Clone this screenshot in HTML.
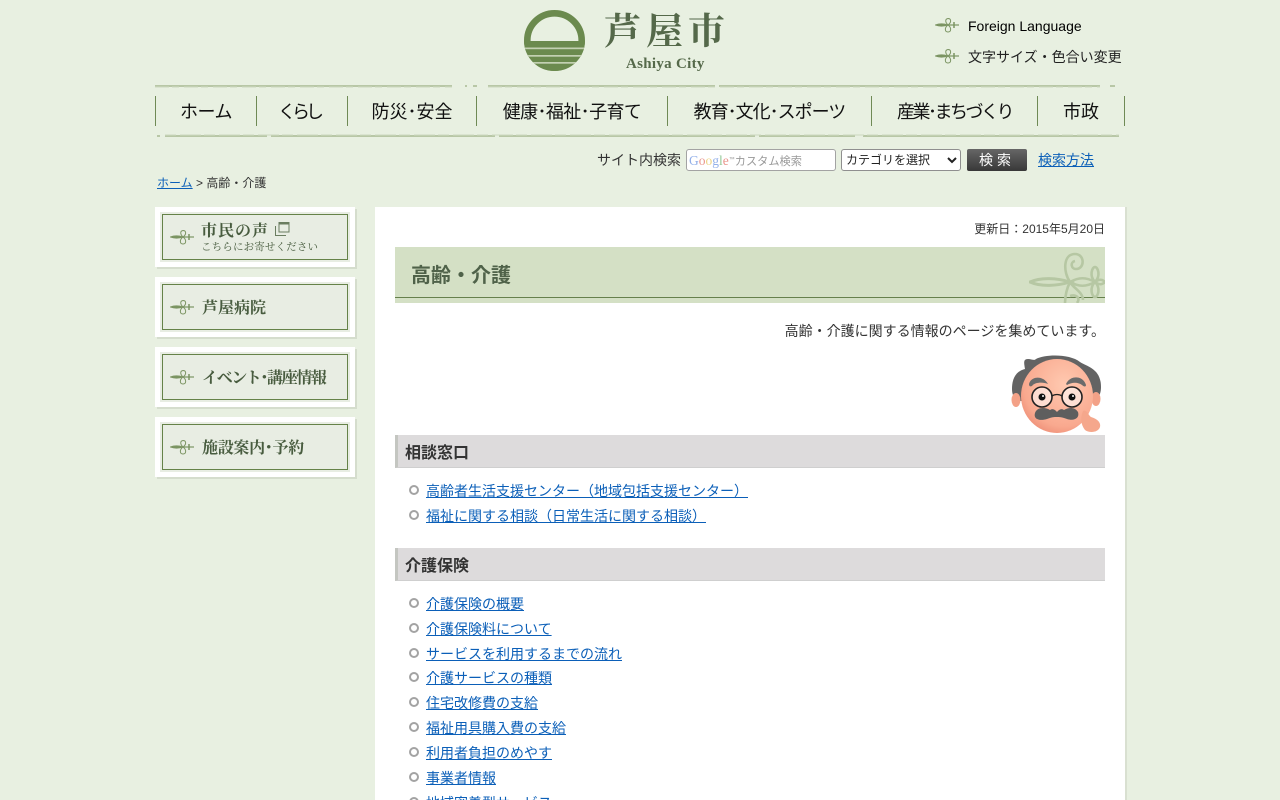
<!DOCTYPE html>
<html lang="ja"><head><meta charset="utf-8"><title>高齢・介護</title>
<style>
html,body{margin:0;padding:0;background:#e8f0e1;width:1280px;height:800px;overflow:hidden}
body{position:relative;font-family:"Liberation Sans","Noto Sans CJK JP",sans-serif;color:#333;font-size:14px}
a{color:#0b5fb8}
.a{position:absolute;white-space:nowrap}
.serif{font-family:"Liberation Serif","Noto Serif CJK JP","Noto Serif CJK SC",serif}
.nav{position:absolute;top:97px;height:28px;line-height:28px;font-size:18px;color:#111;font-family:"Noto Sans CJK JP",sans-serif;font-weight:400;white-space:nowrap;text-align:center}
.sep{position:absolute;top:96px;width:1px;height:30px;background:#6f8a55}
.btn{position:absolute;left:155px;width:200px;height:60px;background:#fff;box-shadow:2px 2px 0 #d5ddcd}
.btn i{position:absolute;left:5px;top:5px;width:190px;height:50px;background:#e8ede3}
.btn b{position:absolute;left:7px;top:7px;width:184px;height:44px;border:1px solid #658248}
.btn span{position:absolute;left:47px;top:14px;font:700 16px/26px "Noto Serif CJK SC",serif;color:#485c3f;white-space:nowrap}
.btn svg{position:absolute;left:15px;top:22px}
h2{position:absolute;left:395px;width:707px;height:32px;margin:0;background:#dddbdc;border-left:3px solid #c4c6c1;border-bottom:1px solid #cfcfcf;font-size:16px;line-height:38px;font-weight:700;color:#333;text-indent:7px;overflow:hidden}
.li{position:absolute;left:426px;font-size:14px;line-height:20px;white-space:nowrap}
.li::before{content:"";position:absolute;left:-17px;top:4px;width:6px;height:6px;border:2px solid #a3a3a3;border-radius:50%}
</style></head><body>
<svg width="0" height="0" style="position:absolute"><defs>
<g id="orn" fill="none" stroke="#7b9462"><path d="M0 8C4 6.5 9 6.5 13 8C9 9.5 4 9.5 0 8Z" fill="#7b9462" stroke-width=".8"/><path d="M13 8H24" stroke-width="1.2"/><path d="M13 8C10 5 10 2 13 1.5C16 1.5 17 5 13 8C9 11 10 15 13 15C16 15 17 11 13 8" stroke-width="1"/><path d="M19 5V11" stroke-width="1.5"/></g>
</defs></svg>

<!-- Logo -->
<svg class="a" style="left:524px;top:10px" width="61" height="61" viewBox="0 0 61 61">
<defs><clipPath id="c"><circle cx="30.5" cy="30.5" r="30.5"/></clipPath></defs>
<circle cx="30.5" cy="30.5" r="27.2" fill="none" stroke="#6b8a4e" stroke-width="6.6"/>
<g clip-path="url(#c)"><rect y="31" width="61" height="30" fill="#6b8a4e"/><rect y="37.5" width="61" height="1.7" fill="#c3d0b2"/><rect y="45" width="61" height="1.7" fill="#c3d0b2"/><rect y="52" width="61" height="1.7" fill="#c3d0b2"/></g>
</svg>
<div class="a serif" style="left:604px;top:10px;font-size:37px;line-height:46px;color:#55694a;letter-spacing:5px;font-weight:700">芦屋市</div>
<div class="a serif" style="left:626px;top:55px;font-size:15px;line-height:18px;color:#55694a;font-weight:700;letter-spacing:.3px">Ashiya City</div>

<svg class="a" style="left:935px;top:17px" width="24" height="17"><use href="#orn"/></svg>
<div class="a" style="left:968px;top:17px;line-height:18px;color:#000">Foreign Language</div>
<svg class="a" style="left:935px;top:48px" width="24" height="17"><use href="#orn"/></svg>
<div class="a" style="left:968px;top:48px;line-height:18px;color:#222">文字サイズ・色合い変更</div>

<!-- Nav -->
<svg class="a" style="left:155px;top:84px" width="970" height="54">
<path d="M0 2H297M310 2H312M318 2H322M333 2H560M564 2H945M955 2H960" stroke="#b8c7a6" stroke-width="2"/>
<path d="M0 2H297M333 2H945" stroke="#cdd8bf" stroke-width="1" stroke-dasharray="14 3 7 5" transform="translate(0,1)"/>
<path d="M2 52H5M10 52H112M116 52H340M344 52H600M604 52H700M708 52H964" stroke="#b8c7a6" stroke-width="2"/>
<path d="M10 52H964" stroke="#cdd8bf" stroke-width="1" stroke-dasharray="11 4 21 3" transform="translate(0,-1)"/>
</svg>
<div class="sep" style="left:155px"></div><div class="sep" style="left:256px"></div><div class="sep" style="left:347px"></div><div class="sep" style="left:476px"></div><div class="sep" style="left:667px"></div><div class="sep" style="left:871px"></div><div class="sep" style="left:1037px"></div><div class="sep" style="left:1124px"></div>
<div class="nav" style="left:156px;width:100px;letter-spacing:-.5px">ホーム</div>
<div class="nav" style="left:254px;width:90px;letter-spacing:-4px">くらし</div>
<div class="nav" style="left:348px;width:128px">防災･安全</div>
<div class="nav" style="left:477px;width:190px;letter-spacing:-.6px">健康･福祉･子育て</div>
<div class="nav" style="left:668px;width:203px;letter-spacing:-1px">教育･文化･スポーツ</div>
<div class="nav" style="left:872px;width:165px;letter-spacing:-2.5px">産業･まちづくり</div>
<div class="nav" style="left:1038px;width:86px">市政</div>

<!-- Search -->
<div class="a" style="left:597px;top:151px;line-height:18px;color:#333">サイト内検索</div>
<div class="a" style="left:686px;top:149px;width:148px;height:20px;background:#fff;border:1px solid #a3a3a3;border-radius:3px;font-size:11.2px;line-height:21px;color:#999;text-indent:2px"><span class="serif" style="font-size:13.5px;opacity:.55"><span style="color:#3a6fd8">G</span><span style="color:#d8402f">o</span><span style="color:#e0b020">o</span><span style="color:#3a6fd8">g</span><span style="color:#3a9a40">l</span><span style="color:#d8402f">e</span></span><span style="font-size:6px;vertical-align:4px">™</span>カスタム検索</div>
<div class="a" style="left:841px;top:149px;width:118px;height:20px;background:#fff;border:1px solid #8f8f8f;border-radius:3px;font-size:12px;line-height:21px;color:#222;text-indent:4px">カテゴリを選択
<svg style="position:absolute;right:3px;top:7px" width="10" height="7"><path d="M1 1L5 5L9 1" fill="none" stroke="#222" stroke-width="2"/></svg></div>
<div class="a" style="left:967px;top:149px;width:60px;height:22px;border-radius:2px;background:linear-gradient(#666,#383838);color:#fff;text-align:center;font:400 14px/22px 'Noto Sans CJK JP',sans-serif;letter-spacing:4px">検索</div>
<div class="a" style="left:1038px;top:151px;line-height:18px"><a href="#">検索方法</a></div>
<div class="a" style="left:157px;top:175px;font-size:12px;line-height:16px;color:#333"><a href="#">ホーム</a> &gt; 高齢・介護</div>

<!-- Side -->
<div class="btn" style="top:207px"><i></i><b></b><svg width="24" height="17"><use href="#orn"/></svg><span style="left:46px;top:9px;font-size:16px;line-height:28px;letter-spacing:1px;font-weight:700">市民の声</span><span style="left:46px;top:33px;font-size:10.5px;line-height:14px;font-weight:400;letter-spacing:.15px">こちらにお寄せください</span>
<svg style="left:120px;top:15px" width="15" height="14"><path d="M4 .5H14V10H4ZM.5 4V13.5H11" fill="none" stroke="#6a7d60"/><path d="M4 1.5H14" stroke="#6a7d60" stroke-width="2"/></svg></div>
<div class="btn" style="top:277px"><i></i><b></b><svg width="24" height="17"><use href="#orn"/></svg><span style="top:17px">芦屋病院</span></div>
<div class="btn" style="top:347px"><i></i><b></b><svg width="24" height="17"><use href="#orn"/></svg><span style="top:17px;letter-spacing:-1.4px">イベント･講座情報</span></div>
<div class="btn" style="top:417px"><i></i><b></b><svg width="24" height="17"><use href="#orn"/></svg><span style="top:17px;letter-spacing:-.3px">施設案内･予約</span></div>

<!-- Main -->
<div class="a" style="left:375px;top:207px;width:750px;height:600px;background:#fff;box-shadow:2px 0 0 #d9e0d1"></div>
<div class="a" style="right:175px;top:220px;font-size:12px;line-height:18px;color:#333">更新日：2015年5月20日</div>
<div class="a" style="left:395px;top:247px;width:710px;height:56px;background:#d4e0c5;overflow:hidden">
<div style="position:absolute;left:0;right:0;top:50px;height:1px;background:#66804c"></div>
<svg style="position:absolute;left:634px;top:5px" width="76" height="51" viewBox="0 0 76 51" fill="none" stroke="#b6c7a3" stroke-width="2.6">
<path d="M1 30C12 25 28 26 41 30C28 34 12 35 1 30Z" stroke-width="3"/>
<path d="M41 30C50 25 57 25 66 30C57 35 50 35 41 30Z"/>
<path d="M66 30C70 27 73 27 76 30C73 33 70 33 66 30Z"/>
<path d="M41 30C34 20 34 2 46 2C56 2 56 17 47 17C42 17 41 10 46 9"/>
<path d="M41 30C44 36 54 40 54 48M41 30C38 36 36 44 36 52M41 44C47 42 52 46 48 51"/>
<path d="M66 30C60 24 63 15 66 15C69 15 72 24 66 30C60 36 63 45 66 45C69 45 72 36 66 30Z"/></svg>
<div style="position:absolute;left:16px;top:12px;font:700 20px/30px 'Noto Sans CJK JP',sans-serif;color:#4f6249">高齢・介護</div></div>
<div class="a" style="right:175px;top:321px;line-height:20px;color:#333">高齢・介護に関する情報のページを集めています。</div>

<!-- Character -->
<svg class="a" style="left:1010px;top:353px" width="94" height="82" viewBox="0 0 94 82">
<defs><radialGradient id="sk" cx=".6" cy=".35" r=".8"><stop offset="0" stop-color="#ffc9b0"/><stop offset=".7" stop-color="#f9a98f"/><stop offset="1" stop-color="#e8806a"/></radialGradient></defs>
<path d="M2 36C2 24 7 18 15 16C14 10 13 6 18 6C22 6 24 8 26 6C36 1 60 1 70 9C78 14 91 16 91 34C91 44 86 48 80 48H12C6 48 2 44 2 36Z" fill="#636363"/>
<ellipse cx="6" cy="47" rx="4.5" ry="7" fill="#f3a187"/><ellipse cx="86" cy="46" rx="4.5" ry="7" fill="#f3a187"/>
<ellipse cx="47" cy="43" rx="36" ry="37" fill="url(#sk)"/>
<path d="M19 31C21 23 33 22 38 31C33 29 25 29 22 33C20 34 19 33 19 31ZM56 31C60 22 73 22 76 32C76 34 74 34 72 32C68 29 62 29 57 32Z" fill="#6b6b6b"/>
<circle cx="32" cy="44" r="10" fill="#fff" fill-opacity=".55" stroke="#222" stroke-width="1.6"/><circle cx="62" cy="44" r="10" fill="#fff" fill-opacity=".55" stroke="#222" stroke-width="1.6"/><path d="M42 43C45 41 49 41 52 43" stroke="#222" fill="none" stroke-width="1.3"/>
<circle cx="32" cy="44" r="3.5" fill="#111"/><circle cx="62" cy="44" r="3.5" fill="#111"/><circle cx="33" cy="43" r="1" fill="#fff"/><circle cx="63" cy="43" r="1" fill="#fff"/>
<path d="M25 60C27 54 35 54 40 57C43 55 45 57 47 59C49 57 51 55 54 57C59 54 65 54 68 59C70 66 63 68 57 66C52 64 49 64 47 64C44 64 42 64 37 66C31 68 23 67 25 60Z" fill="#5e5e5e"/>
<path d="M73 58C77 56 78 62 81 64C88 66 91 70 90 74C88 80 79 80 75 77C71 72 70 65 73 58Z" fill="#f5a78c"/>
</svg>

<h2 style="top:435px">相談窓口</h2>
<div class="li" style="top:481px"><a href="#">高齢者生活支援センター（地域包括支援センター）</a></div>
<div class="li" style="top:506px"><a href="#">福祉に関する相談（日常生活に関する相談）</a></div>
<h2 style="top:548px">介護保険</h2>
<div class="li" style="top:594px"><a href="#">介護保険の概要</a></div>
<div class="li" style="top:619px"><a href="#">介護保険料について</a></div>
<div class="li" style="top:644px"><a href="#">サービスを利用するまでの流れ</a></div>
<div class="li" style="top:668px"><a href="#">介護サービスの種類</a></div>
<div class="li" style="top:693px"><a href="#">住宅改修費の支給</a></div>
<div class="li" style="top:718px"><a href="#">福祉用具購入費の支給</a></div>
<div class="li" style="top:743px"><a href="#">利用者負担のめやす</a></div>
<div class="li" style="top:768px"><a href="#">事業者情報</a></div>
<div class="li" style="top:793px"><a href="#">地域密着型サービス</a></div>
</body></html>
